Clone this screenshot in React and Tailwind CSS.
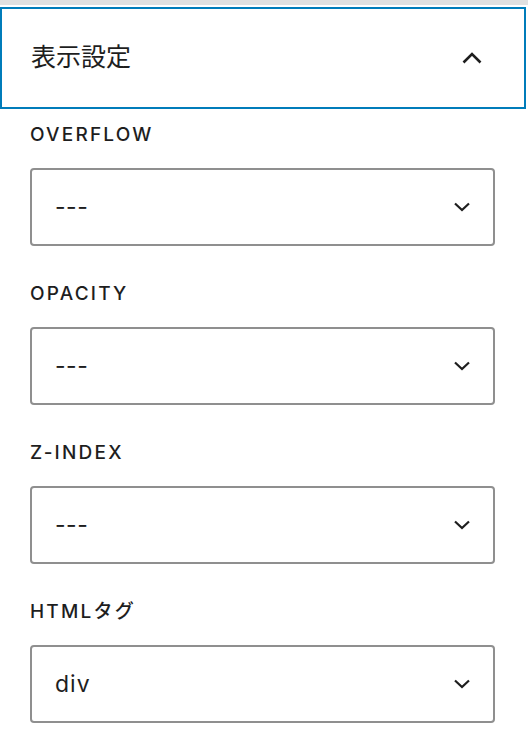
import React from "react";

const fields = [
    { label: "OVERFLOW", value: "---" },
    { label: "OPACITY", value: "---" },
    { label: "Z-INDEX", value: "---" },
    { label: "HTMLタグ", value: "div" },
];

const ChevronUp = () => (
    <svg width="20" height="12" viewBox="0 0 20 12" fill="none">
        <path d="M1.5 10.5 L10 2 L18.5 10.5" stroke="#1e1e1e" strokeWidth="2.6" />
    </svg>
);

const ChevronDown = () => (
    <svg width="16" height="10" viewBox="0 0 16 10" fill="none">
        <path d="M1 1.5 L8 8 L15 1.5" stroke="#1e1e1e" strokeWidth="2.2" />
    </svg>
);

const SelectField = ({ label, value }) => (
    <div className="flex flex-col">
        <label className="h-6 leading-6 text-[19px] font-medium tracking-[2.2px] text-[#1e1e1e]">{label}</label>
        <div className="mt-[21px] h-[78px] w-[465px] flex items-center justify-between rounded-[4px] border-2 border-[#8f8f8f] bg-white pl-[23px] pr-[23px]">
            <span
                className={
                    value === "---"
                        ? "text-[23px] tracking-[0.5px] text-[#1e1e1e]"
                        : "text-[23px] tracking-[1px] text-[#1e1e1e]"
                }
            >
                {value}
            </span>
            <ChevronDown />
        </div>
    </div>
);

export default function App() {
    return (
        <div
            className="w-[528px] h-[752px] bg-white overflow-hidden"
            style={{ fontFamily: 'Inter, "Noto Sans CJK JP", sans-serif' }}
        >
            {/* top strip */}
            <div className="h-[5px] bg-[#e0e0e0]" />

            {/* panel header */}
            <div className="mt-[2px] w-[526px] h-[102px] border-2 border-[#007cba] flex items-center justify-between pl-[29px] pr-[42px]">
                <span className="text-[25px] text-[#1e1e1e]">表示設定</span>
                <ChevronUp />
            </div>

            {/* fields */}
            <div className="pt-[14px] px-[30px] flex flex-col gap-9">
                {fields.map((f) => (
                    <SelectField key={f.label} label={f.label} value={f.value} />
                ))}
            </div>
        </div>
    );
}
